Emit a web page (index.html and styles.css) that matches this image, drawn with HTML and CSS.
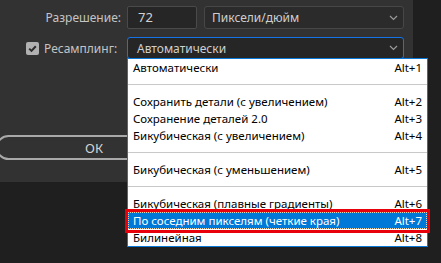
FILE: index.html
```html
<!DOCTYPE html>
<html lang="ru">
<head>
<meta charset="utf-8">
<link rel="stylesheet" href="styles.css">
</head>
<body>
<div class="dialog">
  <div class="row row-res">
    <div class="label">Разрешение:</div>
    <div class="input">72</div>
    <div class="select select-units">
      <span>Пиксели/дюйм</span>
      <svg class="chev" width="9" height="6" viewBox="0 0 9 6"><path d="M1 1 L4.5 4.5 L8 1" fill="none" stroke="#9a9a9a" stroke-width="1.2"/></svg>
    </div>
  </div>
  <div class="row row-resample">
    <div class="label label-check">
      <span class="checkbox"><svg width="13" height="13" viewBox="0 0 13 13"><path d="M3.2 6.6 L5.5 8.9 L9.8 4.3" fill="none" stroke="#2c2c2c" stroke-width="2"/></svg></span>
      <span>Ресамплинг:</span>
    </div>
    <div class="select select-resample">
      <span>Автоматически</span>
      <svg class="chev" width="9" height="6" viewBox="0 0 9 6"><path d="M1 1 L4.5 4.5 L8 1" fill="none" stroke="#9a9a9a" stroke-width="1.2"/></svg>
    </div>
  </div>
  <div class="row row-ok">
    <div class="btn-ok">ОК</div>
  </div>
</div>

<ul class="menu">
  <li class="item"><span>Автоматически</span><span>Alt+1</span></li>
  <li class="sep"></li>
  <li class="item"><span>Сохранить детали (с увеличением)</span><span>Alt+2</span></li>
  <li class="item"><span>Сохранение деталей 2.0</span><span>Alt+3</span></li>
  <li class="item"><span>Бикубическая (с увеличением)</span><span>Alt+4</span></li>
  <li class="sep"></li>
  <li class="item"><span>Бикубическая (с уменьшением)</span><span>Alt+5</span></li>
  <li class="sep"></li>
  <li class="item"><span>Бикубическая (плавные градиенты)</span><span>Alt+6</span></li>
  <li class="item selected"><span>По соседним пикселям (четкие края)</span><span>Alt+7</span></li>
  <li class="item"><span>Билинейная</span><span>Alt+8</span></li>
</ul>
<div class="annot"></div>
</body>
</html>
```

FILE: styles.css
```css
html, body {
  margin: 0;
  padding: 0;
}
body {
  width: 441px;
  height: 263px;
  background: #1f1f1f;
  font-family: "Noto Sans", "DejaVu Sans", sans-serif;
  position: relative;
  overflow: hidden;
}
.dialog {
  width: 413px;
  height: 182px;
  background: #323232;
  display: flex;
  flex-direction: column;
  padding-top: 6px;
  box-sizing: border-box;
  color: #c4c4c4;
  font-size: 12px;
  overflow: hidden;
}
.row {
  display: flex;
  align-items: center;
}
.label {
  width: 121px;
  text-align: right;
  flex: none;
}
.row-res {
  height: 23px;
}
.input {
  margin-left: 6px;
  width: 70px;
  height: 23px;
  box-sizing: border-box;
  border: 1px solid #4a4a4a;
  background: #262626;
  border-radius: 2px;
  padding-left: 10px;
  line-height: 21px;
  color: #d2d2d2;
  font-size: 13px;
}
.select {
  height: 23px;
  box-sizing: border-box;
  border: 1px solid #474747;
  background: #2b2b2b;
  border-radius: 3px;
  display: flex;
  align-items: center;
  justify-content: space-between;
  padding: 0 5px 0 7px;
  color: #cfcfcf;
}
.select-units {
  margin-left: 7px;
  width: 200px;
}
.row-resample {
  margin-top: 8px;
  height: 22px;
}
.label-check {
  display: flex;
  align-items: center;
  justify-content: flex-start;
  padding-left: 26px;
  box-sizing: border-box;
  gap: 5px;
}
.checkbox {
  width: 13px;
  height: 13px;
  border-radius: 2px;
  background: #b1b1b1;
  display: block;
}
.checkbox svg { display: block; }
.select-resample {
  margin-left: 6px;
  width: 277px;
  height: 22px;
  border-color: #1473e6;
  background: #262626;
  padding-left: 9px;
}
.row-ok {
  margin-top: 76px;
}
.btn-ok {
  margin-left: -4px;
  width: 196px;
  height: 25px;
  box-sizing: border-box;
  border: 2px solid #a9a9a9;
  border-radius: 13px;
  display: flex;
  align-items: center;
  justify-content: center;
  color: #d4d4d4;
  font-size: 13px;
}
.menu {
  position: absolute;
  left: 127px;
  top: 58px;
  width: 301px;
  margin: 0;
  padding: 0;
  list-style: none;
  background: #ffffff;
  border: 1px solid #0a78d7;
  box-sizing: border-box;
  font-family: "Noto Sans", "DejaVu Sans", sans-serif;
  font-size: 11.5px;
  color: #000;
}
.item {
  height: 17px;
  display: flex;
  align-items: center;
  justify-content: space-between;
  padding: 0 5px 0 5px;
}
.sep {
  height: 17px;
  display: flex;
  align-items: center;
}
.sep::after {
  content: "";
  display: block;
  width: 100%;
  height: 1px;
  background: #c9c9c9;
}
.selected {
  background: #0078d7;
  color: #ffffff;
  outline: 1px dotted #e8d6b0;
  outline-offset: -1px;
}
.annot {
  position: absolute;
  left: 125px;
  top: 209px;
  width: 305px;
  height: 24px;
  box-sizing: border-box;
  border: 3px solid #e8000b;
}
```
